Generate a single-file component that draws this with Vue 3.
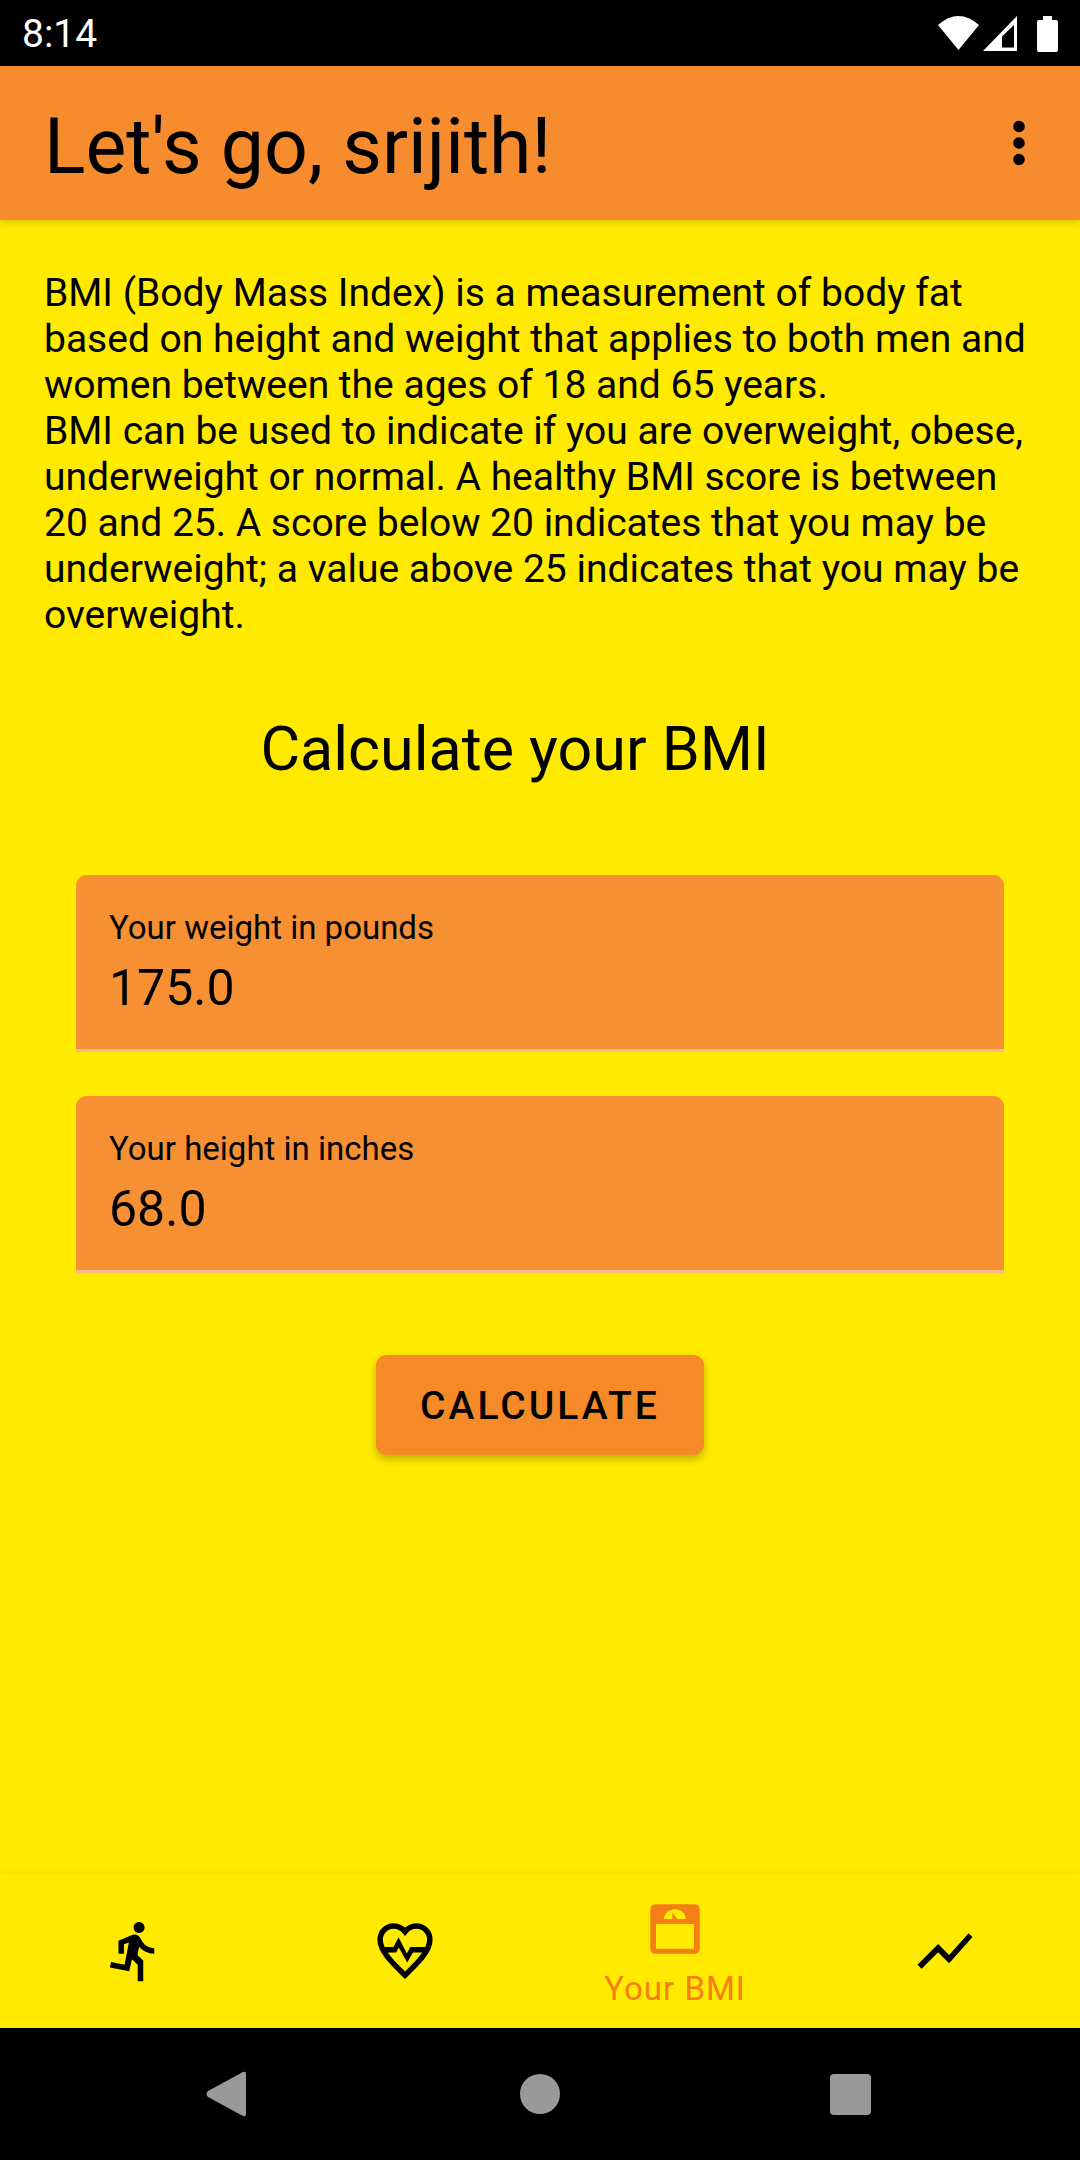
<script setup>
import { ref } from 'vue'

const user = ref('srijith')
const weight = ref('175.0')
const height = ref('68.0')
const bmi = ref(null)

function calculate() {
  const w = parseFloat(weight.value)
  const h = parseFloat(height.value)
  bmi.value = h > 0 ? (w * 703) / (h * h) : null
}
</script>

<template>
  <div class="screen">
    <div class="status-bar">
      <time class="clock">8:14</time>
      <svg class="status-icons" viewBox="0 0 122 38" aria-hidden="true">
        <path d="M0 10Q20.5 -8 41 10L20.5 35Z" fill="#fff" />
        <path d="M45 36 79 1V36ZM64 32.5H76V10L64 21.5Z" fill="#fff" fill-rule="evenodd" />
        <path d="M105 1h9v4h4q2 0 2 2v28q0 2-2 2h-17q-2 0-2-2V7q0-2 2-2h4z" fill="#fff" />
      </svg>
    </div>

    <header class="app-bar">
      <h1 class="title">Let's go, {{ user }}!</h1>
      <button class="menu" type="button" aria-label="More options">
        <svg viewBox="0 0 24 24" aria-hidden="true">
          <circle cx="12" cy="6" r="2.1" />
          <circle cx="12" cy="12" r="2.1" />
          <circle cx="12" cy="18" r="2.1" />
        </svg>
      </button>
    </header>

    <main class="content">
      <p class="intro">
        BMI (Body Mass Index) is a measurement of body fat based on height and weight that applies to both men and women between the ages of 18 and 65 years.<br />
        BMI can be used to indicate if you are overweight, obese, underweight or normal. A healthy BMI score is between 20 and 25. A score below 20 indicates that you may be underweight; a value above 25 indicates that you may be overweight.
      </p>

      <h2 class="heading">Calculate your BMI</h2>

      <form class="form" @submit.prevent="calculate">
        <div class="field">
          <label for="weight">Your weight in pounds</label>
          <input id="weight" v-model="weight" type="text" inputmode="decimal" />
        </div>
        <div class="field">
          <label for="height">Your height in inches</label>
          <input id="height" v-model="height" type="text" inputmode="decimal" />
        </div>
        <button class="submit" type="submit">CALCULATE</button>
      </form>
    </main>

    <nav class="tabs" aria-label="Sections">
      <a class="tab" href="#run" aria-label="Run">
        <svg viewBox="0 0 24 24" aria-hidden="true">
          <path d="M13.49 5.48c1.1 0 2-.9 2-2s-.9-2-2-2-2 .9-2 2 .9 2 2 2zm-3.6 13.9l1-4.4 2.1 2v6h2v-7.5l-2.1-2 .6-3c1.3 1.5 3.3 2.5 5.5 2.5v-2c-1.9 0-3.5-1-4.3-2.4l-1-1.6c-.4-.6-1-1-1.7-1-.3 0-.5.1-.8.1l-5.2 2.2v4.7h2v-3.4l1.8-.7-1.6 8.1-4.9-1-.4 2 7 1.4z" />
        </svg>
      </a>
      <a class="tab" href="#heart" aria-label="Heart">
        <svg viewBox="0 0 24 24" aria-hidden="true">
          <path d="M12 5C11 3.8 9.5 2.95 7.9 2.95 5.1 2.95 2.95 5.1 2.95 7.95 2.95 11.9 7 16 12 20.8 17 16 21.05 11.9 21.05 7.95 21.05 5.1 18.9 2.95 16.1 2.95 14.5 2.95 13 3.8 12 5Z" fill="none" stroke="currentColor" stroke-width="2" />
          <path d="M3.4 10.55H7.8L9.65 7 12.7 12.9 13.9 10.55H20.6L20 12.5H14.9L12.8 16.2 9.75 10.7 8.75 12.5H4Z" />
        </svg>
      </a>
      <a class="tab active" href="#bmi" aria-current="page">
        <svg viewBox="0 0 24 24" aria-hidden="true">
          <path fill-rule="evenodd" d="M5 3H19Q21 3 21 5V19Q21 21 19 21H5Q3 21 3 19V5Q3 3 5 3ZM5.1 10.2V19.2H18.9V10.2ZM8 8.4H11.15L10.9 6 12.85 8.4H16C16 6.3 14.2 4.8 12 4.8S8 6.3 8 8.4Z" />
        </svg>
        <span>Your BMI</span>
      </a>
      <a class="tab" href="#progress" aria-label="Progress">
        <svg viewBox="0 0 24 24" aria-hidden="true">
          <path d="M3.5 18.49l6-6.01 4 4L22 6.92l-1.41-1.41-7.09 7.97-4-4L2 16.99z" />
        </svg>
      </a>
    </nav>

    <div class="system-bar">
      <button type="button" aria-label="Back">
        <svg viewBox="0 0 48 48" aria-hidden="true">
          <path d="M38 2Q41 1 41 4V44Q41 47 38 46L3 27Q0 24 3 21Z" />
        </svg>
      </button>
      <button type="button" aria-label="Home">
        <svg viewBox="0 0 48 48" aria-hidden="true"><circle cx="24" cy="24" r="20" /></svg>
      </button>
      <button type="button" aria-label="Recent apps">
        <svg viewBox="0 0 48 48" aria-hidden="true"><rect x="3" y="4" width="41" height="41" rx="4" /></svg>
      </button>
    </div>
  </div>
</template>

<style>
body {
  margin: 0;
  background: #ffea00;
}
</style>

<style scoped>
.screen {
  display: flex;
  flex-direction: column;
  min-height: 100vh;
  background: #ffea00;
  color: #000;
  font-family: Roboto, "Liberation Sans", sans-serif;
}

.screen * {
  box-sizing: border-box;
}

button {
  border: 0;
  padding: 0;
  background: none;
  color: inherit;
  font-family: inherit;
}

svg {
  display: block;
  fill: currentColor;
}

.status-bar {
  display: flex;
  align-items: center;
  justify-content: space-between;
  height: 66px;
  padding: 2px 20px 0 22px;
  background: #000;
  color: #fff;
}

.clock {
  font-size: 39px;
  line-height: 46px;
}

.status-icons {
  width: 122px;
  height: 38px;
}

.app-bar {
  position: relative;
  display: flex;
  align-items: center;
  justify-content: space-between;
  height: 154px;
  padding: 0 28px 0 44px;
  background: #f68c2d;
  box-shadow: 0 2px 8px rgba(0, 0, 0, 0.16);
}

.title {
  margin: 0;
  padding-top: 8px;
  font-size: 77px;
  font-weight: 400;
  line-height: 92px;
}

.menu svg {
  width: 66px;
  height: 66px;
}

.content {
  flex: 1;
  padding: 50px 44px;
}

.intro {
  margin: 0;
  font-size: 39px;
  line-height: 46px;
}

.heading {
  margin: 0;
  padding: 76px 50px 90px 0;
  font-size: 61px;
  font-weight: 400;
  line-height: 71px;
  text-align: center;
}

.form {
  display: flex;
  flex-direction: column;
  gap: 44px;
  padding: 0 32px;
}

.field {
  display: flex;
  flex-direction: column;
  gap: 12px;
  padding: 33px 33px 32px;
  border-bottom: 3px solid #fabc8a;
  border-radius: 11px 11px 0 0;
  background: #f69033;
}

.field label {
  font-size: 33px;
  line-height: 39px;
}

.field input {
  width: 100%;
  height: 58px;
  padding: 0;
  border: 0;
  outline: 0;
  background: transparent;
  color: inherit;
  font-family: inherit;
  font-size: 50px;
  line-height: 58px;
}

.submit {
  align-self: center;
  height: 100px;
  margin-top: 38px;
  padding: 2px 44px 0;
  border-radius: 11px;
  background: #f68928;
  box-shadow: 0 4px 8px rgba(0, 0, 0, 0.25);
  font-size: 39px;
  font-weight: 500;
  line-height: 46px;
  letter-spacing: 3px;
}

.tabs {
  display: flex;
  height: 154px;
  background: #ffea00;
  box-shadow: 0 -1px 8px rgba(0, 0, 0, 0.06);
}

.tab {
  display: flex;
  flex: 1;
  flex-direction: column;
  align-items: center;
  justify-content: center;
  gap: 7px;
  color: #000;
  text-decoration: none;
}

.tab svg {
  width: 66px;
  height: 66px;
}

.tab.active {
  padding-top: 2px;
  color: #f57f17;
}

.tab span {
  font-size: 33px;
  line-height: 39px;
  letter-spacing: 1px;
}

.system-bar {
  display: flex;
  align-items: center;
  justify-content: space-between;
  height: 132px;
  padding: 0 19%;
  background: #000;
  color: #999;
}

.system-bar svg {
  width: 48px;
  height: 48px;
}
</style>
